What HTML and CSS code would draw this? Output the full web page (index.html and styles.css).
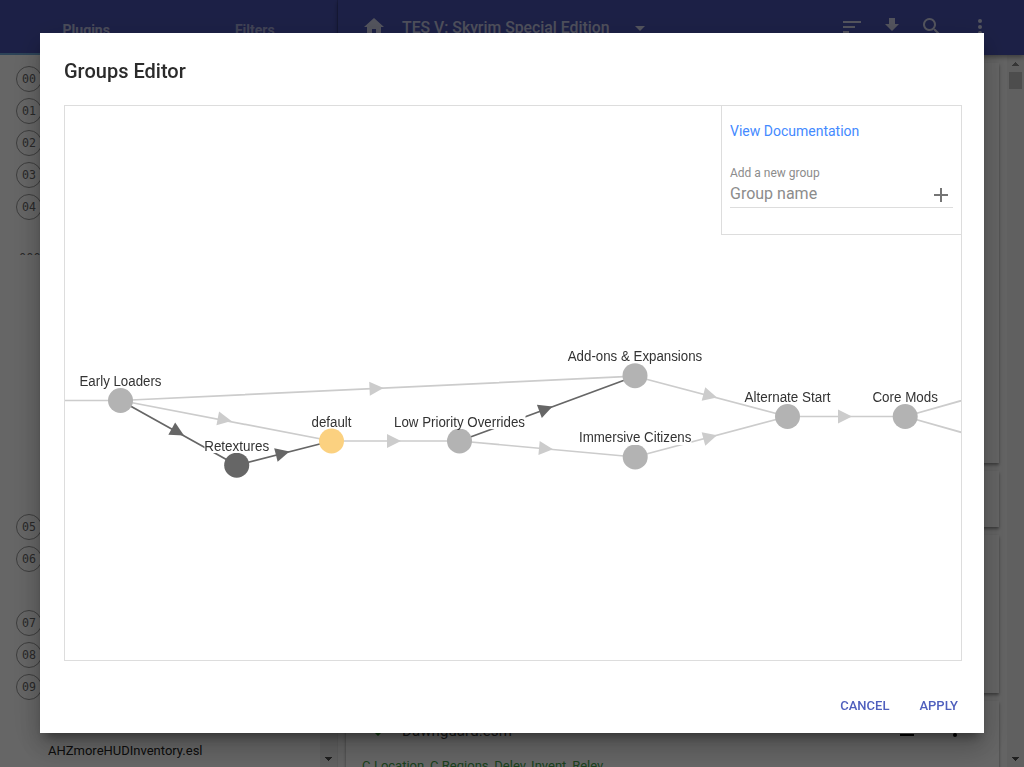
FILE: index.html
```html
<!DOCTYPE html>
<html lang="en">
<head>
<meta charset="utf-8">
<title>Groups Editor</title>
<link rel="stylesheet" href="styles.css">
</head>
<body>
<div class="app">
  <aside class="sidebar">
    <header class="tabs">
      <div class="tab active">Plugins</div>
      <div class="tab">Filters</div>
    </header>
    <div class="sidebar-body">
      <ul class="plugins">
        <li><span class="index">00</span></li>
        <li><span class="index">01</span></li>
        <li><span class="index">02</span></li>
        <li><span class="index">03</span></li>
        <li><span class="index">04</span></li>
        <li class="light"><span class="clip">000</span></li>
        <li class="gap"></li>
        <li><span class="index">05</span></li>
        <li><span class="index">06</span></li>
        <li></li>
        <li><span class="index">07</span></li>
        <li><span class="index">08</span></li>
        <li><span class="index">09</span></li>
        <li></li>
        <li class="named">AHZmoreHUDInventory.esl</li>
      </ul>
      <div class="scrollbar side-scroll"><span></span><svg width="17" height="17"><path d="M5 7h7v1h-1v1h-1v1H9v1H8v-1H7V9H6V8H5z" fill="#505050"/></svg></div>
    </div>
  </aside>
  <main class="main">
    <header class="toolbar">
      <svg class="home" width="24" height="24" viewBox="0 0 24 24"><path d="M10 20v-6h4v6h5v-8h3L12 3 2 12h3v8z"/></svg>
      <span class="game">TES V: Skyrim Special Edition</span>
      <svg class="drop" width="24" height="24" viewBox="0 0 24 24"><path d="M7 10l5 5 5-5z"/></svg>
      <div class="actions">
        <svg width="24" height="24" viewBox="0 0 24 24"><path d="M3 18h6v-2H3v2zM3 6v2h18V6H3zm0 7h12v-2H3v2z"/></svg>
        <svg width="24" height="24" viewBox="0 0 24 24"><path d="M19 9h-4V3H9v6H5l7 7zM5 18v2h14v-2z"/></svg>
        <svg width="24" height="24" viewBox="0 0 24 24"><path d="M15.5 14h-.79l-.28-.27A6.5 6.5 0 1 0 13.73 14.43l.27.28v.79l5 4.99L20.49 19zm-6 0a4.5 4.5 0 1 1 0-9 4.5 4.5 0 0 1 0 9z"/></svg>
        <svg class="more" width="24" height="24" viewBox="0 0 24 24"><circle cx="12" cy="6" r="2"/><circle cx="12" cy="12" r="2"/><circle cx="12" cy="18" r="2"/></svg>
      </div>
    </header>
    <div class="main-body">
      <div class="cards">
        <section class="card first"></section>
        <section class="card second"></section>
        <section class="card third"></section>
        <section class="card last">
          <div class="card-head">
            <svg class="check" width="24" height="24" viewBox="0 0 24 24"><path d="M9 16.200L4.800 12l-1.400 1.400L9 19 21 7l-1.400-1.400z"/></svg>
            <span class="card-title">Dawnguard.esm</span>
            <svg class="eject" width="24" height="24" viewBox="0 0 24 24"><path d="M5 17h14v2H5zM12 5l-6.670 10h13.340z"/></svg>
            <svg width="24" height="24" viewBox="0 0 24 24"><circle cx="12" cy="6" r="2"/><circle cx="12" cy="12" r="2"/><circle cx="12" cy="18" r="2"/></svg>
          </div>
          <div class="bash">C.Location, C.Regions, Delev, Invent, Relev</div>
        </section>
      </div>
      <div class="scrollbar main-scroll">
        <svg width="17" height="17"><path d="M5 11h7v-1h-1V9h-1V8H9V7H8v1H7v1H6v1H5z" fill="#888"/></svg>
        <span class="thumb"></span>
        <svg width="17" height="17"><path d="M5 7h7v1h-1v1h-1v1H9v1H8v-1H7V9H6V8H5z" fill="#505050"/></svg>
      </div>
    </div>
  </main>
</div>

<div class="backdrop">
  <div class="dialog">
    <h2>Groups Editor</h2>
    <div class="editor">
      <svg class="graph" width="896" height="554" viewBox="65 106 896 554">
        <g class="edges">
          <path d="M65 400.5H120.500M120.500 400.500L635 376.200M120.500 400.500L331.500 441M331.500 441H459.500M459.500 441L635 457M635 376.200L787.500 416.500M635 457L787.500 416.500M787.500 416.500H905.200M905.200 416.500L969 398.500M905.200 416.500L969 434.500"/>
          <path class="strong" d="M120.500 400.500L236.700 465.200M236.700 465.200L331.500 441M459.500 441L635 376.200"/>
        </g>
        <g class="arrows">
          <path transform="translate(383.500 388) rotate(-2.700)" d="M0 0l-14-7v14z"/>
          <path transform="translate(231.500 421) rotate(10.900)" d="M0 0l-14-7v14z"/>
          <path transform="translate(401 441)" d="M0 0l-14-7v14z"/>
          <path transform="translate(553 449.300) rotate(5.200)" d="M0 0l-14-7v14z"/>
          <path transform="translate(717 397.500) rotate(14.800)" d="M0 0l-14-7v14z"/>
          <path transform="translate(717 435.300) rotate(-14.900)" d="M0 0l-14-7v14z"/>
          <path transform="translate(852 416.500)" d="M0 0l-14-7v14z"/>
          <g class="strong">
            <path transform="translate(184 435.500) rotate(29.100)" d="M0 0l-14-7v14z"/>
            <path transform="translate(289.500 451.600) rotate(-14.300)" d="M0 0l-14-7v14z"/>
            <path transform="translate(552.500 406.500) rotate(-20.300)" d="M0 0l-14-7v14z"/>
          </g>
        </g>
        <g class="nodes">
          <circle cx="120.500" cy="400.500" r="12.500"/>
          <circle class="selected" cx="236.700" cy="465.200" r="12.500"/>
          <circle class="default" cx="331.500" cy="441" r="12.500"/>
          <circle cx="459.500" cy="441" r="12.500"/>
          <circle cx="635" cy="375.700" r="12.500"/>
          <circle cx="635.200" cy="457" r="12.500"/>
          <circle cx="787.500" cy="416.500" r="12.500"/>
          <circle cx="905.200" cy="416.500" r="12.500"/>
        </g>
        <g class="plates">
          <rect x="204.500" y="437.500" width="65" height="15.500"/>
          <rect x="394" y="413.500" width="131.500" height="15.500"/>
          <rect x="579.500" y="429.500" width="112" height="15.500"/>
        </g>
        <g class="labels">
          <text x="120.500" y="385.500" textLength="82" lengthAdjust="spacingAndGlyphs">Early Loaders</text>
          <text x="236.700" y="450.500" textLength="65" lengthAdjust="spacingAndGlyphs">Retextures</text>
          <text x="331.500" y="426.500" textLength="40" lengthAdjust="spacingAndGlyphs">default</text>
          <text x="459.500" y="426.500" textLength="131" lengthAdjust="spacingAndGlyphs">Low Priority Overrides</text>
          <text x="635" y="361" textLength="134.500" lengthAdjust="spacingAndGlyphs">Add-ons &amp; Expansions</text>
          <text x="635.200" y="442" textLength="112.500" lengthAdjust="spacingAndGlyphs">Immersive Citizens</text>
          <text x="787.500" y="401.500" textLength="86" lengthAdjust="spacingAndGlyphs">Alternate Start</text>
          <text x="905.200" y="401.500" textLength="65.500" lengthAdjust="spacingAndGlyphs">Core Mods</text>
        </g>
      </svg>
      <div class="panel">
        <a class="docs">View Documentation</a>
        <label>Add a new group</label>
        <div class="field"><span>Group name</span>
          <svg width="24" height="24" viewBox="0 0 24 24"><path d="M19 13h-6v6h-2v-6H5v-2h6V5h2v6h6z"/></svg>
        </div>
      </div>
    </div>
    <div class="buttons"><span>CANCEL</span><span>APPLY</span></div>
  </div>
</div>
</body>
</html>
```
FILE: styles.css
```css
* { box-sizing: border-box; }
body { margin: 0; font-family: Roboto, sans-serif; overflow: hidden; }
svg { display: block; flex: none; }
.app { display: flex; width: 1024px; height: 767px; overflow: hidden; background: #fff; }
.sidebar { width: 338px; flex: none; display: flex; flex-direction: column; border-right: 1px solid #e8e8e8; }
.tabs { height: 55px; flex: none; display: flex; background: #4852b0; margin-right: -1px; border-right: 1px solid #3e4799; }
.tab { flex: 1; display: flex; justify-content: center; padding: 22px 0 0 4px; font-size: 14px; line-height: 16px; font-weight: 700; color: rgba(255,255,255,.5); border-bottom: 2px solid transparent; }
.tab.active { color: rgba(255,255,255,.65); border-bottom-color: #6fa8dc; }
.sidebar-body { flex: 1; display: flex; min-height: 0; }
.plugins { list-style: none; margin: 0; padding: 8px 0 0 16px; flex: 1; overflow: hidden; }
.plugins li { height: 32px; display: flex; align-items: center; }
.plugins .gap { height: 256px; }
.plugins .light { align-items: flex-end; }
.clip { height: 2px; overflow: hidden; font: 12px/10px "DejaVu Sans Mono", monospace; padding-left: 3px; color: #666; }
.plugins .named { padding: 0 0 2px 32px; font-size: 13px; color: #222; }
.index { width: 26px; height: 26px; border: 1px solid #999; border-radius: 50%; text-align: center; font: 11.600px/24px "DejaVu Sans Mono", monospace; color: #666; }
.scrollbar { width: 17px; background: #f1f1f1; display: flex; flex-direction: column; justify-content: space-between; }
.main { flex: 1; min-width: 0; display: flex; flex-direction: column; }
.toolbar { height: 55px; flex: none; display: flex; align-items: flex-start; padding: 15px 32px 0 24px; background: #4852b0; fill: rgba(255,255,255,.75); color: rgba(255,255,255,.7); box-shadow: 0 2px 5px rgba(0,0,0,.4); position: relative; }
.game { font-size: 15.800px; line-height: 26px; margin-left: 16px; font-weight: 500; width: 226px; white-space: nowrap; }
.toolbar .drop { margin-top: 1px; }
.actions { margin-left: auto; display: flex; gap: 16px; }
.actions .more { margin-left: 8px; }
.main-body { flex: 1; display: flex; min-height: 0; background: #fafafa; }
.cards { flex: 1; padding: 8px 8px 0; display: flex; flex-direction: column; gap: 8px; overflow: hidden; }
.card { flex: none; background: #fff; box-shadow: 0 2px 3px rgba(0,0,0,.4); }
.first { height: 400px; }
.second { height: 56px; }
.third { height: 158px; }
.last { height: 100px; }
.card-head { display: flex; align-items: center; padding: 16px 32px 0 23px; height: 40px; }
.check { fill: #238b20; }
.card-title { font-size: 15px; line-height: 20px; padding-top: 4px; font-weight: 400; letter-spacing: .1px; margin-left: 9px; color: #444; }
.eject { margin-left: auto; margin-right: 24px; }
.bash { padding: 17px 0 0 16px; font-size: 13px; line-height: 16px; color: #43a047; white-space: nowrap; }
.main-scroll .thumb { width: 13px; height: 17px; margin: 0 2px auto; background: #c1c1c1; }
.backdrop { position: fixed; inset: 0; padding: 33px 40px 34px; background: rgba(0,0,0,.6); }
.dialog { height: 700px; padding: 24px 23px 0 24px; background: #fff; box-shadow: 0 16px 24px 2px rgba(0,0,0,.14), 0 6px 30px 5px rgba(0,0,0,.12), 0 8px 10px -5px rgba(0,0,0,.4); }
.dialog h2 { margin: 0 0 20px; font-size: 20px; line-height: 28px; font-weight: 500; color: #2b2b2b; }
.editor { position: relative; width: 898px; height: 556px; border: 1px solid #ddd; }
.panel { position: absolute; top: 0; right: 0; width: 240px; height: 129px; padding: 17px 8px 0; background: #fff; border: solid #ddd; border-width: 0 0 1px 1px; display: flex; flex-direction: column; }
.docs { font-size: 14px; line-height: 16px; color: #448aff; }
.panel label { margin-top: 24px; font-size: 12px; line-height: 20px; color: #8c8c8c; }
.field { height: 25px; display: flex; align-items: center; justify-content: space-between; font-size: 16px; line-height: 24px; color: #8c8c8c; border-bottom: 1px solid #ddd; fill: #757575; }
.field span { padding-bottom: 3px; }
.buttons { display: flex; justify-content: flex-end; gap: 30px; margin-top: 35px; padding-right: 3px; font-size: 13px; line-height: 20px; font-weight: 500; color: #4f5fbd; }
.edges { stroke: #ccc; stroke-width: 1.7; fill: none; }
.edges .strong { stroke: #666; }
.arrows { fill: #ccc; }
.arrows .strong { fill: #666; }
.nodes { fill: #b3b3b3; }
.nodes .selected { fill: #666; }
.nodes .default { fill: #fbd180; }
.plates { fill: #fff; }
.labels { font: 14px "Liberation Sans", Arial, sans-serif; fill: #333; text-anchor: middle; }
```
